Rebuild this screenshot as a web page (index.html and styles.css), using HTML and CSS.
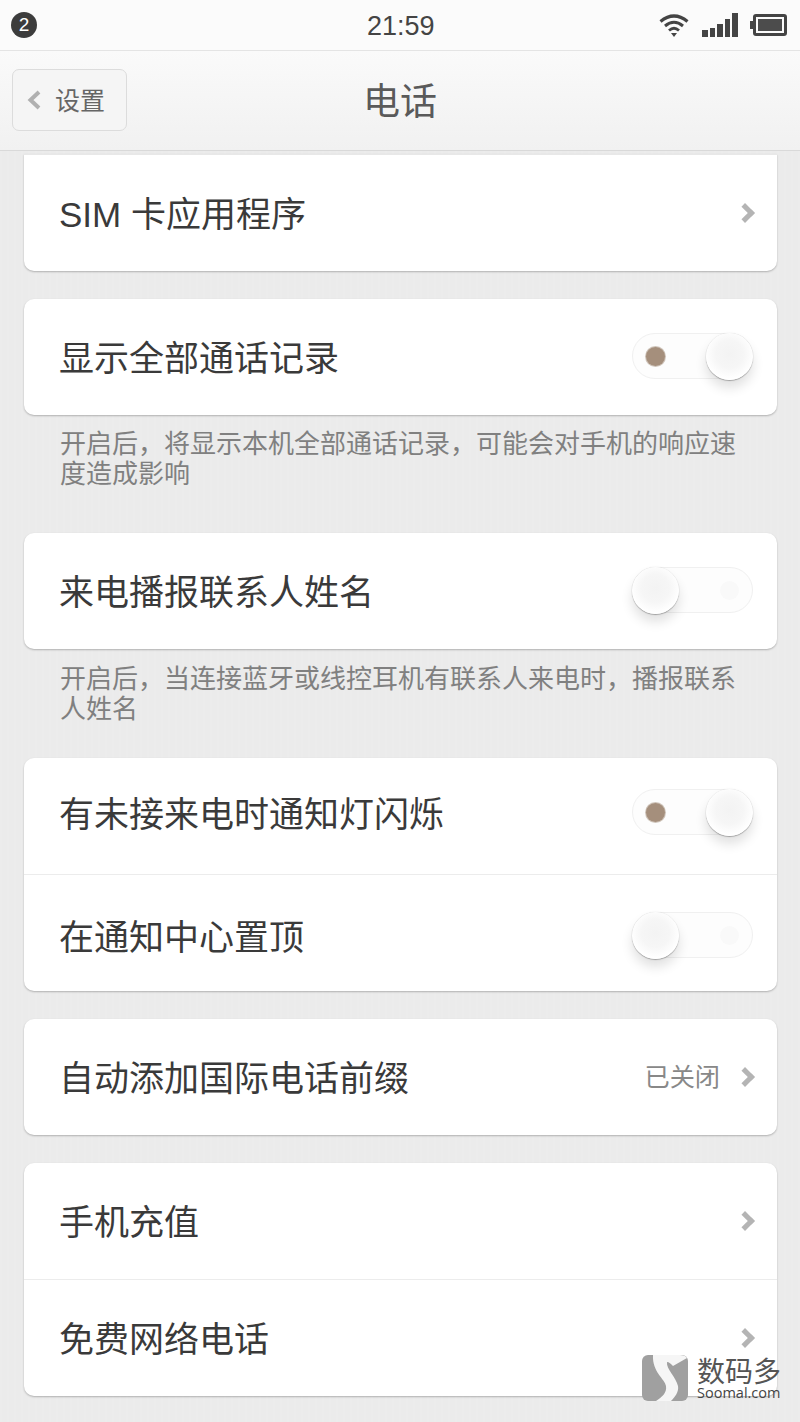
FILE: index.html
```html
<!DOCTYPE html>
<html lang="zh-CN">
<head>
  <meta charset="UTF-8" />
  <title>电话</title>
  <link rel="stylesheet" href="styles.css">
</head>
<body>

  <!-- Status bar -->
  <div class="status-bar">
    <span class="notif-badge">2</span>
    <span class="clock">21:59</span>
    <div class="status-icons">
      <svg class="icon-wifi" width="30" height="24" viewBox="0 0 30 24">
        <path d="M1.5 8.5 Q15 -2.5 28.5 8.5" fill="none" stroke="#444" stroke-width="3.2" />
        <path d="M6 13 Q15 5.5 24 13" fill="none" stroke="#444" stroke-width="3" />
        <path d="M10 17.5 Q15 13 20 17.5" fill="none" stroke="#444" stroke-width="2.8" />
        <path d="M12 20 L18 20 L15 24 Z" fill="#444" />
      </svg>
      <div class="signal">
        <i class="bar-1"></i><i class="bar-2"></i><i class="bar-3"></i><i class="bar-4"></i><i class="bar-5"></i>
      </div>
      <div class="battery"><div class="battery-fill"></div></div>
    </div>
  </div>

  <!-- Action bar -->
  <div class="action-bar">
    <div class="back-btn">
      <svg width="14" height="20" viewBox="0 0 14 20"><path d="M12 2 L3.5 10 L12 18" fill="none" stroke="#b0b0b0" stroke-width="4" /></svg>
      <span>设置</span>
    </div>
    <div class="title">电话</div>
  </div>

  <div class="list">
    <div class="card card-clipped">
      <div class="row"><span class="label">SIM 卡应用程序</span><span class="chevron"></span></div>
    </div>

    <div class="card">
      <div class="row"><span class="label">显示全部通话记录</span><div class="switch on"><b></b><u></u></div></div>
    </div>
    <p class="summary">开启后，将显示本机全部通话记录，可能会对手机的响应速度造成影响</p>

    <div class="card">
      <div class="row"><span class="label">来电播报联系人姓名</span><div class="switch"><b></b><u></u></div></div>
    </div>
    <p class="summary summary-tight">开启后，当连接蓝牙或线控耳机有联系人来电时，播报联系人姓名</p>

    <div class="card">
      <div class="row row-up"><span class="label">有未接来电时通知灯闪烁</span><div class="switch on"><b></b><u></u></div></div>
      <div class="row row-down"><span class="label">在通知中心置顶</span><div class="switch"><b></b><u></u></div></div>
    </div>

    <div class="card">
      <div class="row"><span class="label">自动添加国际电话前缀</span><span class="value">已关闭</span><span class="chevron"></span></div>
    </div>

    <div class="card">
      <div class="row"><span class="label">手机充值</span><span class="chevron"></span></div>
      <div class="row"><span class="label">免费网络电话</span><span class="chevron"></span></div>
    </div>
  </div>

  <!-- Watermark sits over the last card -->
  <div class="watermark">
    <svg width="46" height="46" viewBox="0 0 46 46">
      <rect width="46" height="46" rx="6" fill="#a0a0a0" />
      <path d="M11 0 H38 C41 0 44 1 45 3 L31 11 C29 9 27 7 25 7 C24 14 34 22 36 31 C37 37 33 42 29 46 H14 C20 42 25 38 24 31 C23 24 10 17 11 0 Z" fill="#f6f6f6" />
    </svg>
    <div class="watermark-text">
      <span class="wm-cn">数码多</span>
      <span class="wm-en">Soomal.com</span>
    </div>
  </div>

</body>
</html>
```

FILE: styles.css
```css
/* Page, with the faint linen weave of the theme */
body {
  margin: 0;
  width: 800px;
  height: 1422px;
  overflow: hidden;
  position: relative;
  background-color: #ebebeb;
  background-image: repeating-linear-gradient(90deg, rgba(255,255,255,0.07) 0 2px, transparent 2px 7px);
  color: #333;
  font-family: "Noto Sans CJK SC", "Liberation Sans", sans-serif;
}

/* Status bar */
.status-bar {
  height: 50px;
  display: flex;
  align-items: center;
  justify-content: space-between;
  padding: 0 13px 0 11px;
  background-color: #fbfbfb;
  border-bottom: 1px solid #e4e4e4;
  position: relative;
}

.notif-badge {
  width: 26px;
  height: 26px;
  border-radius: 50%;
  background-color: #3c3c3c;
  color: #fff;
  font-family: "Liberation Sans", sans-serif;
  font-size: 19px;
  line-height: 26px;
  text-align: center;
}

.clock {
  position: absolute;
  left: 367px;
  top: 10px;
  font-family: "Liberation Sans", sans-serif;
  font-size: 27px;
  line-height: 32px;
  color: #444;
}

.status-icons {
  display: flex;
  align-items: center;
  gap: 13px;
}

.signal {
  display: flex;
  align-items: flex-end;
  gap: 2px;
  height: 24px;
  margin-right: 2px;
}

.signal i {
  display: block;
  width: 5.6px;
  background-color: #444;
}

.bar-1 { height: 7px; }
.bar-2 { height: 9px; }
.bar-3 { height: 13px; }
.bar-4 { height: 18px; }
.bar-5 { height: 24px; }

.battery {
  width: 34px;
  height: 22px;
  box-sizing: border-box;
  border: 3px solid #444;
  border-radius: 3px;
  padding: 2px;
  position: relative;
}

.battery::before {
  content: "";
  position: absolute;
  left: -6px;
  top: 4px;
  width: 3px;
  height: 8px;
  background-color: #444;
}

.battery-fill {
  height: 100%;
  background-color: #4c4c4c;
}

/* Action bar */
.action-bar {
  height: 99px;
  display: flex;
  align-items: center;
  position: relative;
  padding-left: 12px;
  background: linear-gradient(#fafafa, #f1f1f1);
  border-bottom: 1px solid #d9d9d9;
  z-index: 1;
}

.back-btn {
  width: 115px;
  height: 62px;
  box-sizing: border-box;
  display: flex;
  align-items: center;
  gap: 14px;
  padding-left: 14px;
  margin-top: -1px;
  border: 1px solid #dcdcdc;
  border-radius: 7px;
  background-color: #f5f5f5;
  color: #666;
  font-size: 25px;
}

.back-btn span {
  margin-top: -2px;
}

.title {
  position: absolute;
  left: 0;
  right: 0;
  top: 23px;
  text-align: center;
  font-size: 37px;
  line-height: 50px;
  color: #5a5a5a;
}

/* Settings list */
.list {
  padding: 3px 23px 0 24px;
}

.card {
  background-color: #fff;
  border-radius: 10px;
  box-shadow: 0 1px 2px rgba(0,0,0,0.25);
  margin-bottom: 28px;
}

.card-clipped {
  border-radius: 0 0 10px 10px;
  border-top: 1px solid #e8e8e8;
}

.row {
  height: 116px;
  box-sizing: border-box;
  display: flex;
  align-items: center;
  padding: 0 24px 0 35px;
}

.row + .row {
  height: 117px;
  border-top: 1px solid #ececec;
}

/* The first two-row card sits its rows a little apart */
.row-up {
  padding-bottom: 6px;
}

.row-down {
  padding-top: 6px;
}

.label {
  flex: 1;
  font-family: "Liberation Sans", "Noto Sans CJK SC", sans-serif;
  font-size: 35px;
  line-height: 48px;
  color: #3a3a3a;
  margin-top: 3px;
}

.value {
  font-size: 25.2px;
  color: #888;
  margin-right: 18px;
  margin-top: -4px;
}

/* Disclosure arrow */
.chevron {
  width: 9px;
  height: 9px;
  margin-right: 1px;
  border-top: 5px solid #b4b4b4;
  border-right: 5px solid #b4b4b4;
  transform: rotate(45deg);
}

/* Explanation under a card */
.summary {
  margin: -16px 16px 46px 36px;
  font-size: 26px;
  line-height: 30px;
  color: #808080;
}

.summary-tight {
  margin-top: -15px;
  margin-bottom: 36px;
}

/* Toggle switch */
.switch {
  width: 121px;
  height: 46px;
  box-sizing: border-box;
  border: 1px solid #f0f0f0;
  border-radius: 23px;
  background-color: #fdfdfd;
  position: relative;
  margin-top: -2px;
}

.switch u {
  position: absolute;
  top: 13px;
  right: 13px;
  width: 19px;
  height: 19px;
  border-radius: 50%;
  background-color: #f9f9f9;
}

.switch b {
  position: absolute;
  top: -1px;
  left: -1px;
  width: 47px;
  height: 47px;
  border-radius: 50%;
  background: radial-gradient(circle at 50% 45%, #f3f3f3 0, #f6f6f6 40%, #fff 70%);
  box-shadow: 0 1px 1px rgba(0,0,0,0.28), 0 0 1px rgba(0,0,0,0.2), 0 8px 12px rgba(0,0,0,0.12);
  z-index: 1;
}

.switch.on b {
  left: auto;
  right: -1px;
}

.switch.on u {
  right: auto;
  left: 13px;
  background-color: #a58f7c;
  box-shadow: 0 0 0 1px #cfc4ba;
}

/* Soomal watermark */
.watermark {
  position: absolute;
  left: 642px;
  top: 1355px;
  display: flex;
  gap: 9px;
  z-index: 2;
}

.watermark-text {
  display: flex;
  flex-direction: column;
}

.wm-cn {
  font-size: 28px;
  line-height: 30px;
  color: #555;
}

.wm-en {
  font-family: "Open Sans", "Liberation Sans", sans-serif;
  font-size: 14.5px;
  line-height: 15px;
  color: #444;
}
```
